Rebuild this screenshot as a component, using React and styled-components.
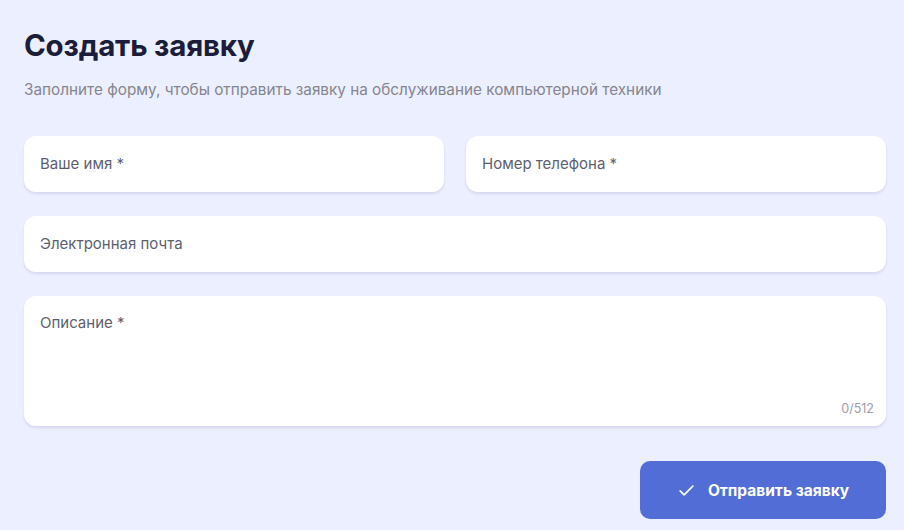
import React from 'react';
import styled, { createGlobalStyle } from 'styled-components';

const GlobalStyle = createGlobalStyle`
  html, body {
    margin: 0;
    padding: 0;
    background: #ecefff;
  }
  * { box-sizing: border-box; }
`;

const Page = styled.div`
  width: 904px;
  height: 530px;
  padding: 26px 18px 0 24px;
  background: #ecefff;
  font-family: Inter, 'Noto Sans', sans-serif;
`;

const Title = styled.h1`
  margin: 0;
  font-size: 29.5px;
  font-weight: 700;
  letter-spacing: -0.2px;
  color: #1b1d3a;
  line-height: 38px;
`;

const Subtitle = styled.p`
  margin: 16px 0 0;
  font-size: 15.3px;
  color: #85858f;
  line-height: 20px;
`;

const Form = styled.div`
  margin-top: 36px;
  display: flex;
  flex-direction: column;
  gap: 24px;
`;

const Row = styled.div`
  display: grid;
  grid-template-columns: ${p => (p.cols === 2 ? '1fr 1fr' : '1fr')};
  gap: 22px;
`;

const Field = styled.div`
  position: relative;
  height: ${p => (p.tall ? '130px' : '56px')};
  background: #ffffff;
  border-radius: 12px;
  box-shadow: 0 2px 3px rgba(60, 70, 120, 0.13);
  padding: ${p => (p.tall ? '17px 16px' : '0 16px')};
  display: flex;
  align-items: ${p => (p.tall ? 'flex-start' : 'center')};
`;

const Label = styled.span`
  font-size: 15px;
  color: #5d5f70;
  line-height: 20px;
`;

const Counter = styled.span`
  position: absolute;
  right: 12px;
  bottom: 10px;
  font-size: 12.5px;
  color: #9d9ea8;
`;

const Actions = styled.div`
  display: flex;
  justify-content: flex-end;
  margin-top: 35px;
`;

const SubmitButton = styled.button`
  width: 246px;
  height: 58px;
  border: none;
  border-radius: 10px;
  background: #526dd5;
  color: #ffffff;
  font-family: Inter, 'Noto Sans', sans-serif;
  font-size: 15.5px;
  font-weight: 700;
  display: flex;
  align-items: center;
  justify-content: center;
  gap: 12px;
  cursor: pointer;
  padding: 0;
`;

const CheckIcon = () => (
  <svg width="19" height="19" viewBox="0 0 24 24" fill="none" stroke="#fff" strokeWidth="2.2" strokeLinecap="round" strokeLinejoin="round">
    <path d="M4 12.5l5 5L20 6.5" />
  </svg>
);

export default function App() {
  return (
    <>
      <GlobalStyle />
      <Page>
        <Title>Создать заявку</Title>
        <Subtitle>Заполните форму, чтобы отправить заявку на обслуживание компьютерной техники</Subtitle>
        <Form>
          <Row cols={2}>
            <Field><Label>Ваше имя *</Label></Field>
            <Field><Label>Номер телефона *</Label></Field>
          </Row>
          <Row>
            <Field><Label>Электронная почта</Label></Field>
          </Row>
          <Row>
            <Field tall>
              <Label>Описание *</Label>
              <Counter>0/512</Counter>
            </Field>
          </Row>
        </Form>
        <Actions>
          <SubmitButton>
            <CheckIcon />
            Отправить заявку
          </SubmitButton>
        </Actions>
      </Page>
    </>
  );
}
